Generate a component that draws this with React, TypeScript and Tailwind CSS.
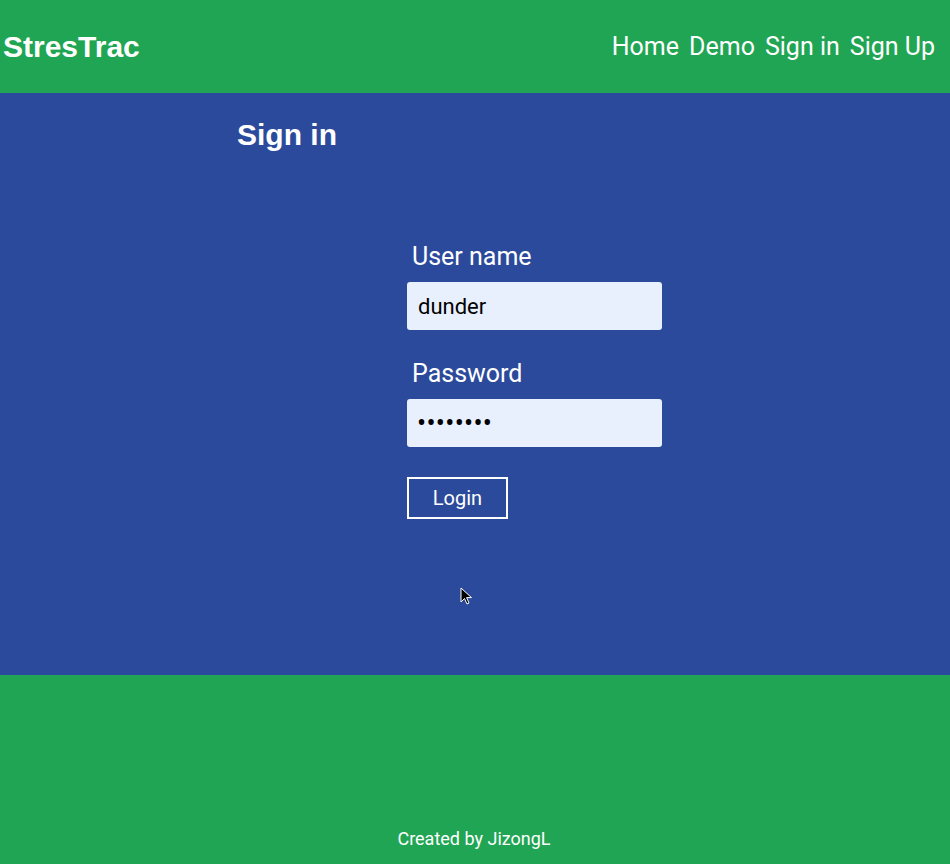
import React, { useState } from "react";

const App = () => {
    const [username, setUsername] = useState("dunder");
    const [password, setPassword] = useState("password");

    return (
        <div className="relative flex flex-col min-h-screen font-['Roboto',sans-serif] text-white">
            {/* Header */}
            <header className="h-[93px] bg-[#1fa553] flex items-center justify-between pl-[3px] pr-[15px]">
                <h1 className="font-['Liberation_Sans',Arial,sans-serif] font-bold text-[30px] leading-none">StresTrac</h1>
                <nav className="flex gap-[10px] text-[25px] leading-none">
                    <a href="#">Home</a>
                    <a href="#">Demo</a>
                    <a href="#">Sign in</a>
                    <a href="#">Sign Up</a>
                </nav>
            </header>

            {/* Sign in */}
            <main className="h-[582px] bg-[#2c4a9b] pt-[24px]">
                <h2 className="ml-[237px] font-['Liberation_Sans',Arial,sans-serif] font-bold text-[30px] leading-[36px]">Sign in</h2>
                <form
                    className="ml-[407px] mt-[88px] w-[255px] flex flex-col"
                    onSubmit={(e) => e.preventDefault()}
                >
                    <label className="pl-[5px] text-[25px] leading-[32px]">User name</label>
                    <input
                        type="text"
                        value={username}
                        onChange={(e) => setUsername(e.target.value)}
                        className="mt-[9px] h-[48px] rounded-[3px] bg-[#e8f0fe] text-black px-[11px] text-[22px] outline-none"
                    />
                    <label className="mt-[28px] pl-[5px] text-[25px] leading-[32px]">Password</label>
                    <input
                        type="password"
                        value={password}
                        onChange={(e) => setPassword(e.target.value)}
                        className="mt-[9px] h-[48px] rounded-[3px] bg-[#e8f0fe] text-black px-[10px] text-[27px] tracking-[0.3px] outline-none"
                    />
                    <button
                        type="submit"
                        className="mt-[30px] w-[101px] h-[42px] border-2 border-white text-[20px]"
                    >
                        Login
                    </button>
                </form>
            </main>

            {/* Footer */}
            <footer className="h-[189px] bg-[#1fa553] flex items-end justify-center pb-[12px] text-[18px]">
                <p className="ml-[-2px]">Created by JizongL</p>
            </footer>

            {/* mouse pointer */}
            <svg className="absolute left-[460px] top-[587px]" width="13" height="19" viewBox="0 0 13 19">
                <path d="M1 1 L1 15 L4.5 11.5 L7 17 L9 16 L6.6 10.6 L11.5 10.6 Z" fill="#000" stroke="#fff" strokeWidth="1" />
            </svg>
        </div>
    );
};

export default App;
